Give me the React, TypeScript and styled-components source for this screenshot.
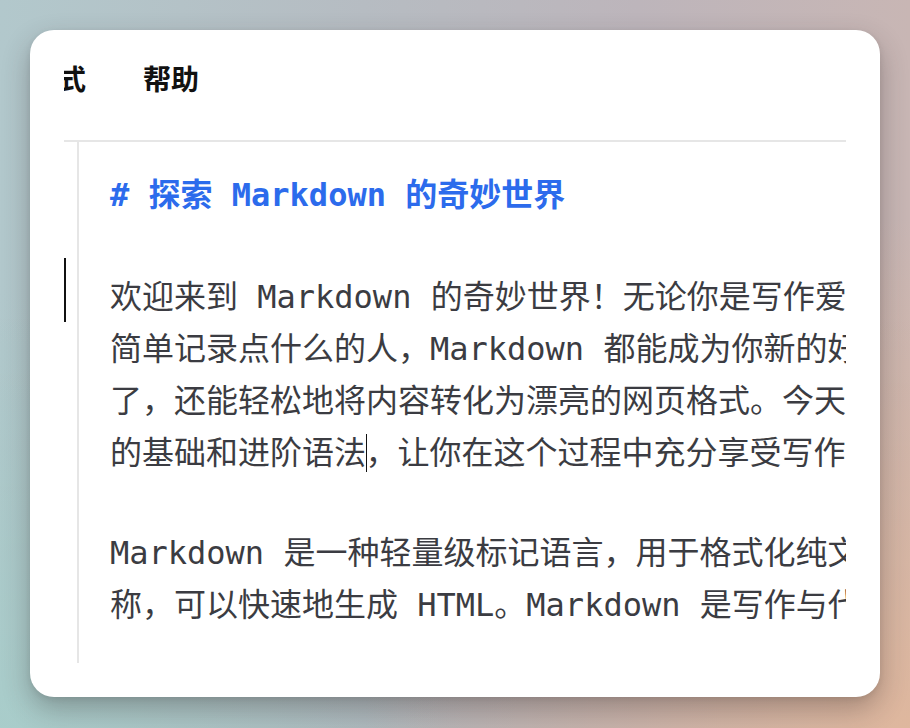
import React from "react";
import styled, { createGlobalStyle } from "styled-components";

const GlobalStyle = createGlobalStyle`
  html, body { margin: 0; padding: 0; }
  body {
    width: 910px;
    height: 728px;
    overflow: hidden;
    font-family: "Noto Sans CJK SC", "Noto Sans", sans-serif;
  }
`;

const Backdrop = styled.div`
  box-sizing: border-box;
  width: 910px;
  height: 728px;
  padding: 30px 30px 31px 30px;
  background:
    linear-gradient(180deg, rgba(255,255,255,0) 40%, rgba(0,0,0,0.04) 100%),
    linear-gradient(90deg, #b2c8cc 0%, #b6bcc2 40%, #bdb5bb 70%, #c8b6b4 100%);
  position: relative;
  &::after {
    content: "";
    position: absolute;
    inset: 0;
    background:
      radial-gradient(ellipse 60% 70% at 100% 100%, rgba(226,184,156,0.9) 0%, rgba(226,184,156,0) 100%),
      radial-gradient(ellipse 50% 60% at 0% 100%, rgba(168,208,204,0.8) 0%, rgba(168,208,204,0) 100%);
    pointer-events: none;
  }
`;

const Card = styled.div`
  position: relative;
  z-index: 1;
  box-sizing: border-box;
  height: 100%;
  background: #ffffff;
  border-radius: 24px;
  box-shadow: 0 12px 28px rgba(40, 30, 30, 0.3), 0 2px 6px rgba(0, 0, 0, 0.08);
  display: flex;
  flex-direction: column;
  padding: 0 34px 34px 34px;
  overflow: hidden;
`;

const MenuBar = styled.div`
  height: 110px;
  display: flex;
  align-items: center;
  overflow: hidden;
  border-bottom: 2px solid #e6e6e6;
`;

const MenuTrack = styled.div`
  display: flex;
  gap: 57px;
  margin-left: -34px;
  padding-bottom: 14px;
`;

const MenuItem = styled.span`
  font-family: "Noto Sans CJK SC", sans-serif;
  font-weight: 700;
  font-size: 28px;
  line-height: 36px;
  color: #111;
  white-space: nowrap;
`;

const Editor = styled.div`
  flex: 1;
  display: flex;
  position: relative;
  min-height: 0;
`;

const Gutter = styled.div`
  width: 13px;
  flex: none;
  position: relative;
`;

const Caret = styled.div<{ $top: number; $height: number }>`
  position: absolute;
  left: 0;
  top: ${(p) => p.$top}px;
  width: 1.5px;
  height: ${(p) => p.$height}px;
  background: #111;
`;

const Document = styled.div`
  flex: 1;
  min-width: 0;
  border-left: 2px solid #e6e6e6;
  padding: 27px 0 32px 31px;
  overflow: hidden;
  font-family: "DejaVu Sans Mono", "Noto Sans CJK SC", monospace;
  font-size: 32px;
  line-height: 52px;
  color: #3b3c42;
`;

const Heading = styled.div`
  color: #2c6bec;
  font-weight: 700;
  white-space: pre;
  margin-bottom: 50px;
`;

const Paragraph = styled.div`
  margin-bottom: 48px;
  &:last-child { margin-bottom: 0; }
`;

const Line = styled.div`
  white-space: pre;
  position: relative;
`;

const InlineCaret = styled.span`
  display: inline-block;
  width: 0;
  height: 38px;
  border-left: 1.5px solid #111;
  vertical-align: -8px;
  margin-right: -1.5px;
`;

const paragraphOne = [
  "欢迎来到 Markdown 的奇妙世界！无论你是写作爱好者、程序员，还是只是想",
  "简单记录点什么的人，Markdown 都能成为你新的好朋友。它不仅让写作变得简单",
  "了，还能轻松地将内容转化为漂亮的网页格式。今天，就让我们一起探索 Markdown",
];

const paragraphTwo = [
  "Markdown 是一种轻量级标记语言，用于格式化纯文本。它以简单、直观的语法而著",
  "称，可以快速地生成 HTML。Markdown 是写作与代码的完美结合，既简单又强大。",
];

export default function App() {
  return (
    <>
      <GlobalStyle />
      <Backdrop>
        <Card>
          <MenuBar>
            <MenuTrack>
              <MenuItem>格式</MenuItem>
              <MenuItem>帮助</MenuItem>
            </MenuTrack>
          </MenuBar>
          <Editor>
            <Gutter>
              <Caret $top={116} $height={64} />
            </Gutter>
            <Document>
              <Heading># 探索 Markdown 的奇妙世界</Heading>
              <Paragraph>
                {paragraphOne.map((l) => (
                  <Line key={l}>{l}</Line>
                ))}
                <Line>
                  的基础和进阶语法<InlineCaret />，让你在这个过程中充分享受写作的乐趣！
                </Line>
              </Paragraph>
              <Paragraph>
                {paragraphTwo.map((l) => (
                  <Line key={l}>{l}</Line>
                ))}
              </Paragraph>
            </Document>
          </Editor>
        </Card>
      </Backdrop>
    </>
  );
}
